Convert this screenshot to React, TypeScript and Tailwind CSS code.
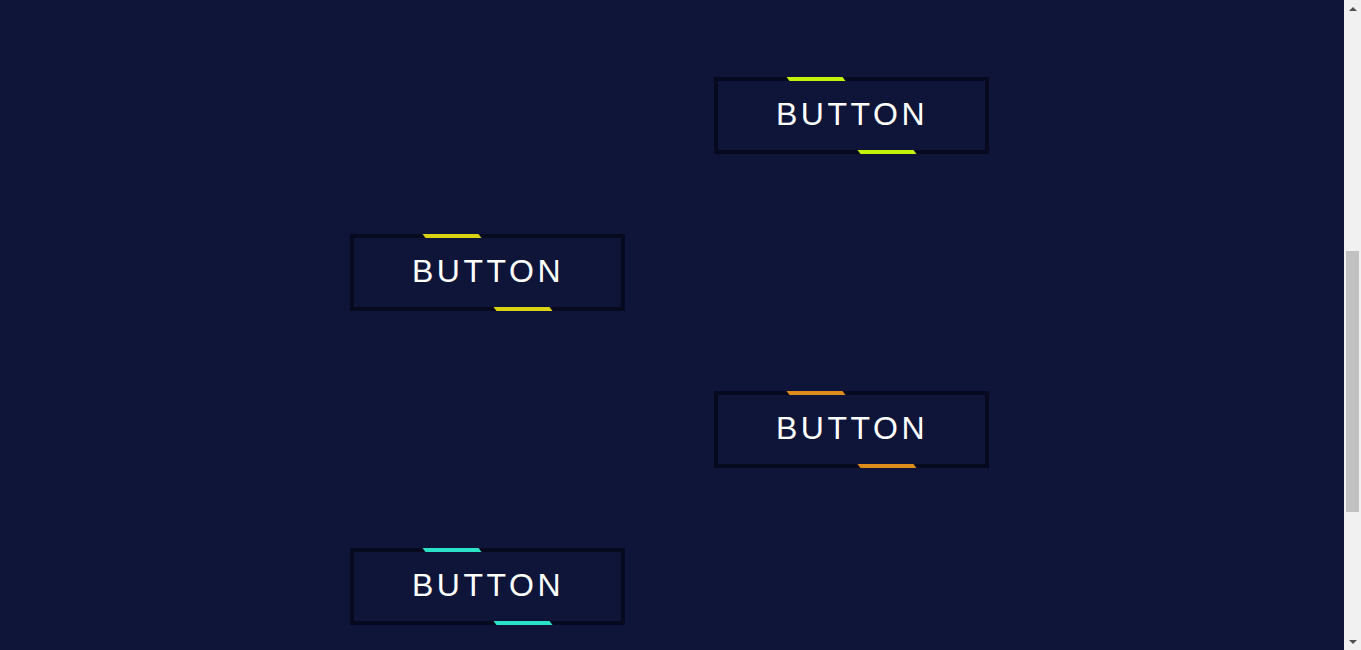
type Btn = { color: string; side: 'left' | 'right' };

const buttons: Btn[] = [
    { color: '#c4f20a', side: 'right' },
    { color: '#d8d414', side: 'left' },
    { color: '#de8c1c', side: 'right' },
    { color: '#2ae2c8', side: 'left' },
];

const GlowButton = ({ color, side }: Btn) => {
    return (
        <button
            className={
                'relative flex h-[77px] w-[275px] shrink-0 items-center justify-center border-4 border-[#070a1e] bg-transparent text-[32px] leading-none tracking-[3.5px] text-white uppercase ' +
                (side === 'left' ? 'self-start' : 'self-end')
            }
            style={{ fontFamily: '"Liberation Sans", Arial, sans-serif' }}
        >
            <span className="absolute -top-1 left-[70px] h-1 w-[56px] skew-x-[37deg]" style={{ background: color }} />
            <span className="pb-[3px] pl-[1px]">Button</span>
            <span className="absolute -bottom-1 right-[70px] h-1 w-[56px] skew-x-[37deg]" style={{ background: color }} />
        </button>
    );
};

// browser-style scrollbar, page is shown scrolled part way down
const Scrollbar = () => (
    <div className="flex h-full w-[17px] shrink-0 flex-col bg-[#f1f1f1]">
        <div className="flex h-[17px] items-center justify-center">
            <div className="h-0 w-0 border-x-[4px] border-b-[4px] border-x-transparent border-b-[#505050]" />
        </div>
        <div className="flex-1 px-[2px] pt-[234px]">
            <div className="h-[261px] bg-[#c1c1c1]" />
        </div>
        <div className="flex h-[17px] items-center justify-center">
            <div className="h-0 w-0 border-x-[4px] border-t-[4px] border-x-transparent border-t-[#505050]" />
        </div>
    </div>
);

export default function App() {
    return (
        <div className="flex h-[650px] overflow-hidden">
            <main className="h-full flex-1 bg-[#0e1538]">
                <div className="mx-auto flex w-[644px] flex-col gap-[80px] pt-[77px] pr-[5px]">
                    {buttons.map((b, i) => (
                        <GlowButton key={i} {...b} />
                    ))}
                </div>
            </main>
            <Scrollbar />
        </div>
    );
}
